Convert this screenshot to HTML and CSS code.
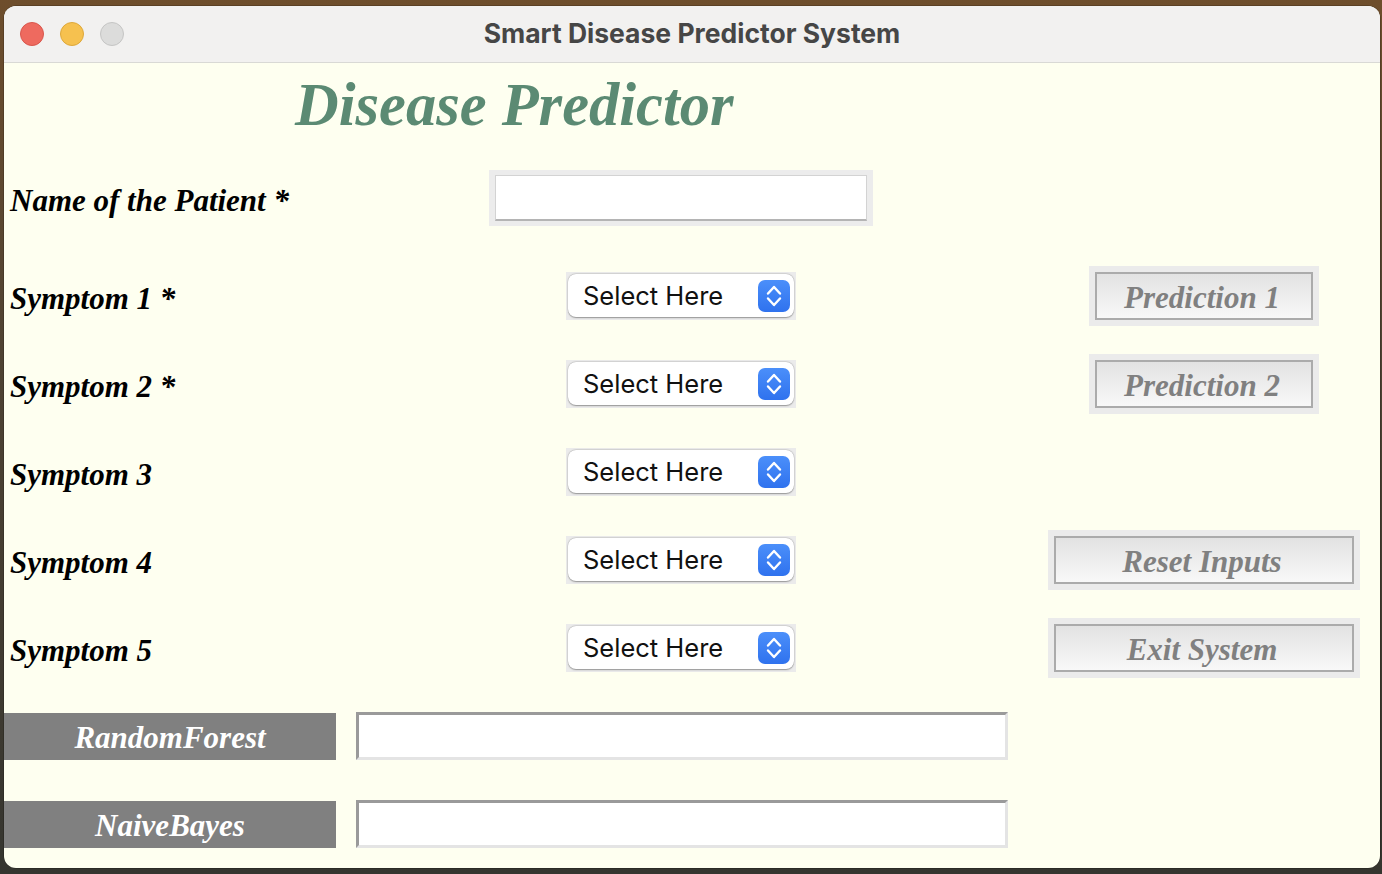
FILE: index.html
```html
<!DOCTYPE html>
<html lang="en">
<head>
<meta charset="utf-8">
<title>Smart Disease Predictor System</title>
<link rel="stylesheet" href="styles.css">
</head>
<body>
<div class="desktop">
  <div class="window">
    <div class="titlebar">
      <div class="lights">
        <span class="light red"></span>
        <span class="light yellow"></span>
        <span class="light grey"></span>
      </div>
      <div class="title">Smart Disease Predictor System</div>
      <div></div>
    </div>
    <div class="content">
      <h1 class="heading">Disease Predictor</h1>

      <div class="row row-name">
        <div class="label">Name of the Patient *</div>
        <div class="cell"><div class="entry-pad"><div class="entry"></div></div></div>
        <div class="cell"></div>
      </div>

      <div class="row">
        <div class="label">Symptom 1 *</div>
        <div class="cell">
          <div class="select-pad"><div class="select"><span>Select Here</span>
            <svg class="stepper" width="32" height="32" viewBox="0 0 32 32"><defs><linearGradient id="g1" x1="0" y1="0" x2="0" y2="1"><stop offset="0" stop-color="#4b8ffa"/><stop offset="1" stop-color="#2f72ee"/></linearGradient></defs><rect width="32" height="32" rx="7" fill="url(#g1)"/><polyline points="10,13.5 16,7 22,13.5" fill="none" stroke="#fff" stroke-width="2.4" stroke-linecap="round" stroke-linejoin="round"/><polyline points="10,18.5 16,25 22,18.5" fill="none" stroke="#fff" stroke-width="2.4" stroke-linecap="round" stroke-linejoin="round"/></svg>
          </div></div>
        </div>
        <div class="cell"><div class="btn-pad"><div class="btn btn-pred">Prediction 1</div></div></div>
      </div>

      <div class="row">
        <div class="label">Symptom 2 *</div>
        <div class="cell">
          <div class="select-pad"><div class="select"><span>Select Here</span>
            <svg class="stepper" width="32" height="32" viewBox="0 0 32 32"><defs><linearGradient id="g2" x1="0" y1="0" x2="0" y2="1"><stop offset="0" stop-color="#4b8ffa"/><stop offset="1" stop-color="#2f72ee"/></linearGradient></defs><rect width="32" height="32" rx="7" fill="url(#g2)"/><polyline points="10,13.5 16,7 22,13.5" fill="none" stroke="#fff" stroke-width="2.4" stroke-linecap="round" stroke-linejoin="round"/><polyline points="10,18.5 16,25 22,18.5" fill="none" stroke="#fff" stroke-width="2.4" stroke-linecap="round" stroke-linejoin="round"/></svg>
          </div></div>
        </div>
        <div class="cell"><div class="btn-pad"><div class="btn btn-pred">Prediction 2</div></div></div>
      </div>

      <div class="row">
        <div class="label">Symptom 3</div>
        <div class="cell">
          <div class="select-pad"><div class="select"><span>Select Here</span>
            <svg class="stepper" width="32" height="32" viewBox="0 0 32 32"><defs><linearGradient id="g3" x1="0" y1="0" x2="0" y2="1"><stop offset="0" stop-color="#4b8ffa"/><stop offset="1" stop-color="#2f72ee"/></linearGradient></defs><rect width="32" height="32" rx="7" fill="url(#g3)"/><polyline points="10,13.5 16,7 22,13.5" fill="none" stroke="#fff" stroke-width="2.4" stroke-linecap="round" stroke-linejoin="round"/><polyline points="10,18.5 16,25 22,18.5" fill="none" stroke="#fff" stroke-width="2.4" stroke-linecap="round" stroke-linejoin="round"/></svg>
          </div></div>
        </div>
        <div class="cell"></div>
      </div>

      <div class="row">
        <div class="label">Symptom 4</div>
        <div class="cell">
          <div class="select-pad"><div class="select"><span>Select Here</span>
            <svg class="stepper" width="32" height="32" viewBox="0 0 32 32"><defs><linearGradient id="g4" x1="0" y1="0" x2="0" y2="1"><stop offset="0" stop-color="#4b8ffa"/><stop offset="1" stop-color="#2f72ee"/></linearGradient></defs><rect width="32" height="32" rx="7" fill="url(#g4)"/><polyline points="10,13.5 16,7 22,13.5" fill="none" stroke="#fff" stroke-width="2.4" stroke-linecap="round" stroke-linejoin="round"/><polyline points="10,18.5 16,25 22,18.5" fill="none" stroke="#fff" stroke-width="2.4" stroke-linecap="round" stroke-linejoin="round"/></svg>
          </div></div>
        </div>
        <div class="cell"><div class="btn-pad"><div class="btn btn-wide">Reset Inputs</div></div></div>
      </div>

      <div class="row">
        <div class="label">Symptom 5</div>
        <div class="cell">
          <div class="select-pad"><div class="select"><span>Select Here</span>
            <svg class="stepper" width="32" height="32" viewBox="0 0 32 32"><defs><linearGradient id="g5" x1="0" y1="0" x2="0" y2="1"><stop offset="0" stop-color="#4b8ffa"/><stop offset="1" stop-color="#2f72ee"/></linearGradient></defs><rect width="32" height="32" rx="7" fill="url(#g5)"/><polyline points="10,13.5 16,7 22,13.5" fill="none" stroke="#fff" stroke-width="2.4" stroke-linecap="round" stroke-linejoin="round"/><polyline points="10,18.5 16,25 22,18.5" fill="none" stroke="#fff" stroke-width="2.4" stroke-linecap="round" stroke-linejoin="round"/></svg>
          </div></div>
        </div>
        <div class="cell"><div class="btn-pad"><div class="btn btn-wide">Exit System</div></div></div>
      </div>

      <div class="result-row">
        <div class="result-label">RandomForest</div>
        <div class="result-entry"></div>
      </div>
      <div class="result-row">
        <div class="result-label">NaiveBayes</div>
        <div class="result-entry"></div>
      </div>
    </div>
  </div>
</div>
</body>
</html>
```

FILE: styles.css
```css
* { box-sizing: border-box; }
html, body { margin: 0; padding: 0; }
body {
  width: 1382px;
  height: 874px;
  overflow: hidden;
  background: linear-gradient(180deg, #6e4e2c 0%, #4f4333 40%, #35352f 100%);
}
.desktop {
  padding: 6px 2px 6px 4px;
}
.window {
  width: 1376px;
  height: 862px;
  border-radius: 12px;
  overflow: hidden;
  background: #fefff0;
  display: flex;
  flex-direction: column;
  box-shadow: 0 0 0 0.5px rgba(0,0,0,0.35);
}
.titlebar {
  height: 57px;
  flex: none;
  background: #f2f1f0;
  border-bottom: 1px solid #d9d9d5;
  display: grid;
  grid-template-columns: 1fr auto 1fr;
  align-items: center;
}
.lights {
  display: flex;
  gap: 16px;
  padding-left: 16px;
}
.light {
  width: 24px;
  height: 24px;
  border-radius: 50%;
  display: block;
}
.red { background: #ee6a5f; border: 1px solid #d9564c; }
.yellow { background: #f6c14f; border: 1px solid #dea83a; }
.grey { background: #dcdcdb; border: 1px solid #c5c5c4; }
.title {
  font-family: Inter, "Noto Sans", sans-serif;
  font-weight: 700;
  font-size: 26.5px;
  color: #464646;
  padding-bottom: 2px;
}
.content {
  flex: 1;
  display: flex;
  flex-direction: column;
}
.heading {
  margin: 0;
  height: 91px;
  padding: 12px 0 0 291px;
  font-family: "Liberation Serif", "Times New Roman", serif;
  font-weight: bold;
  font-style: italic;
  font-size: 60.5px;
  line-height: 60px;
  color: #5b8a73;
}
.row {
  display: grid;
  grid-template-columns: 310px 734px 312px;
  height: 88px;
  align-items: center;
}
.row-name { margin-bottom: 10px; }
.label {
  padding-left: 6px;
  font-family: "Liberation Serif", "Times New Roman", serif;
  font-weight: bold;
  font-style: italic;
  font-size: 31px;
  line-height: 30px;
  color: #000;
  padding-top: 5px;
}
.cell {
  display: flex;
  justify-content: center;
  align-items: center;
}
.entry-pad {
  width: 384px;
  height: 56px;
  background: #ececec;
  padding: 5px 6px;
}
.entry {
  width: 100%;
  height: 100%;
  background: #fff;
  border: 1px solid #d3d3d3;
  border-bottom: 2px solid #b4b4b4;
}
.select-pad {
  width: 230px;
  height: 48px;
  background: #ebebeb;
  padding: 2px 2px 3px 2px;
}
.select {
  height: 100%;
  background: #fff;
  border-radius: 8px;
  box-shadow: 0 0.5px 1.5px rgba(0,0,0,0.35), 0 0 0 0.5px rgba(0,0,0,0.08);
  display: flex;
  align-items: center;
  justify-content: space-between;
  padding: 0 4px 0 15px;
  font-family: Inter, "Noto Sans", sans-serif;
  font-size: 25.5px;
  color: #111;
}
.stepper { display: block; }
.btn-pad {
  background: #ebebeb;
  padding: 6px;
  height: 60px;
}
.btn {
  height: 48px;
  border: 2px solid #ababab;
  background: linear-gradient(180deg, #e2e2e2 0%, #f8f8f8 100%);
  display: flex;
  align-items: center;
  justify-content: center;
  font-family: "Liberation Serif", "Times New Roman", serif;
  font-weight: bold;
  font-style: italic;
  font-size: 31px;
  color: #808080;
  padding: 4px 4px 0 0;
}
.btn-pred { width: 218px; }
.btn-wide { width: 300px; }
.result-row {
  height: 88px;
  display: flex;
  align-items: center;
  gap: 20px;
}
.result-label {
  width: 332px;
  height: 47px;
  background: #808080;
  color: #fff;
  font-family: "Liberation Serif", "Times New Roman", serif;
  font-weight: bold;
  font-style: italic;
  font-size: 31px;
  display: flex;
  align-items: center;
  justify-content: center;
  padding-top: 3px;
}
.result-entry {
  width: 652px;
  height: 48px;
  background: #fff;
  border-style: solid;
  border-width: 3px;
  border-color: #9a9a9a #e4e4e4 #e4e4e4 #9a9a9a;
}
```
